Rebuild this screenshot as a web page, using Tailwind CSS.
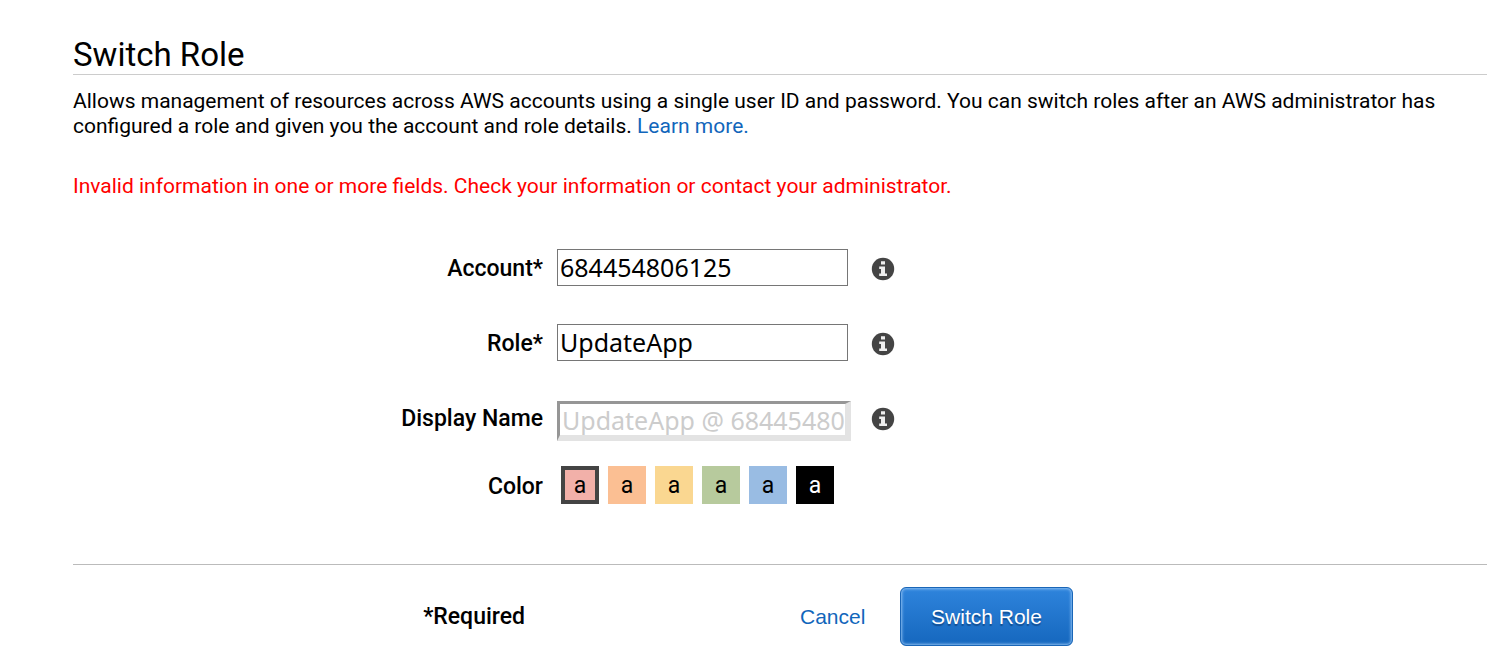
<!DOCTYPE html>
<html lang="en">
<head>
<meta charset="utf-8">
<meta name="viewport" content="width=device-width, initial-scale=1">
<title>Switch Role</title>
<script src="https://cdn.jsdelivr.net/npm/@tailwindcss/browser@4"></script>
</head>
<body class="bg-white text-black font-['Roboto',sans-serif] text-[21px] leading-[25px]">
<svg class="hidden" aria-hidden="true">
  <symbol id="info" viewBox="0 0 24 24">
    <circle cx="12" cy="12" r="11.2" fill="#444"/>
    <path fill="#eee" d="M10 4.200h4v3.300h-4zM8.200 9.500H14v7h2V19H8.200v-2.500H10V12H8.200z"/>
  </symbol>
</svg>
<main class="pl-[73px] pt-9">
  <h1 class="border-b border-[#ccc] text-[33px] leading-[38px]">Switch Role</h1>
  <p class="mt-[14px] pr-10">Allows management of resources across AWS accounts using a single user ID and password. You can switch roles after an AWS administrator has configured a role and given you the account and role details. <a href="#" class="text-[#1166bb]">Learn more.</a></p>
  <p class="mt-[35px] text-[#f00]" role="alert">Invalid information in one or more fields. Check your information or contact your administrator.</p>

  <form>
    <div class="mt-[50px] flex h-[37px] items-center">
      <label for="account" class="w-[470px] pt-[2px] text-right text-[23px] font-medium">Account*</label>
      <input id="account" type="text" value="684454806125" class="ml-[14px] h-[37px] w-[291px] border border-[#767676] px-[2px] pb-[2px] font-['Noto_Sans',sans-serif] text-[25px]">
      <button type="button" aria-label="About account" class="ml-[23px] pt-[2px]"><svg class="size-6"><use href="#info"/></svg></button>
    </div>
    <div class="mt-[38px] flex h-[37px] items-center">
      <label for="role" class="w-[470px] pt-[2px] text-right text-[23px] font-medium">Role*</label>
      <input id="role" type="text" value="UpdateApp" class="ml-[14px] h-[37px] w-[291px] border border-[#767676] px-[2px] pb-[2px] font-['Noto_Sans',sans-serif] text-[25px]">
      <button type="button" aria-label="About role" class="ml-[23px] pt-[2px]"><svg class="size-6"><use href="#info"/></svg></button>
    </div>
    <div class="mt-10 flex h-10 items-center">
      <label for="display" class="w-[470px] pb-[6px] text-right text-[23px] font-medium">Display Name</label>
      <input id="display" type="text" placeholder="UpdateApp @ 684454806125" class="ml-[14px] h-10 w-[294px] border-t-[3px] border-r-[6px] border-b-[6px] border-l-[3px] border-t-[#969696] border-r-[#e3e3e3] border-b-[#e3e3e3] border-l-[#969696] pl-[2px] font-['Noto_Sans',sans-serif] text-[25px] placeholder:text-[#ccc]">
      <button type="button" aria-label="About display name" class="ml-5 pb-1"><svg class="size-6"><use href="#info"/></svg></button>
    </div>
    <fieldset class="mt-[25px] flex h-[38px] items-center" aria-labelledby="color">
      <span id="color" class="w-[470px] pt-[2px] text-right text-[23px] font-medium">Color</span>
      <div class="ml-[18px] flex gap-[9px] text-center text-[23px] leading-[40px]">
        <label class="size-[38px] bg-[#f2b0a9] has-checked:border-4 has-checked:border-[#444] has-checked:leading-[32px]"><input type="radio" name="color" value="red" class="sr-only" checked>a</label>
        <label class="size-[38px] bg-[#fbbf93] has-checked:border-4 has-checked:border-[#444] has-checked:leading-[32px]"><input type="radio" name="color" value="orange" class="sr-only">a</label>
        <label class="size-[38px] bg-[#fad791] has-checked:border-4 has-checked:border-[#444] has-checked:leading-[32px]"><input type="radio" name="color" value="yellow" class="sr-only">a</label>
        <label class="size-[38px] bg-[#b7ca9d] has-checked:border-4 has-checked:border-[#444] has-checked:leading-[32px]"><input type="radio" name="color" value="green" class="sr-only">a</label>
        <label class="size-[38px] bg-[#99bce3] has-checked:border-4 has-checked:border-[#444] has-checked:leading-[32px]"><input type="radio" name="color" value="blue" class="sr-only">a</label>
        <label class="size-[38px] bg-black text-white has-checked:border-4 has-checked:border-[#444] has-checked:leading-[32px]"><input type="radio" name="color" value="black" class="sr-only">a</label>
      </div>
    </fieldset>

    <div class="mt-[60px] flex items-center border-t border-[#bbb] pt-[22px] pb-2">
      <span class="w-[452px] text-right text-[23px] font-medium">*Required</span>
      <a href="#" class="ml-[275px] w-[100px] font-['Liberation_Sans',sans-serif] text-[#1166bb]">Cancel</a>
      <button type="submit" class="h-[59px] w-[173px] rounded-md border border-[#1a66b7] bg-linear-to-b from-[#2e84dc] to-[#1567be] font-['Liberation_Sans',sans-serif] text-white shadow-[inset_0_0_3px_1px_#8fc0f2] text-shadow-[0_2px_1px_#124e91]">Switch Role</button>
    </div>
  </form>
</main>
</body>
</html>
